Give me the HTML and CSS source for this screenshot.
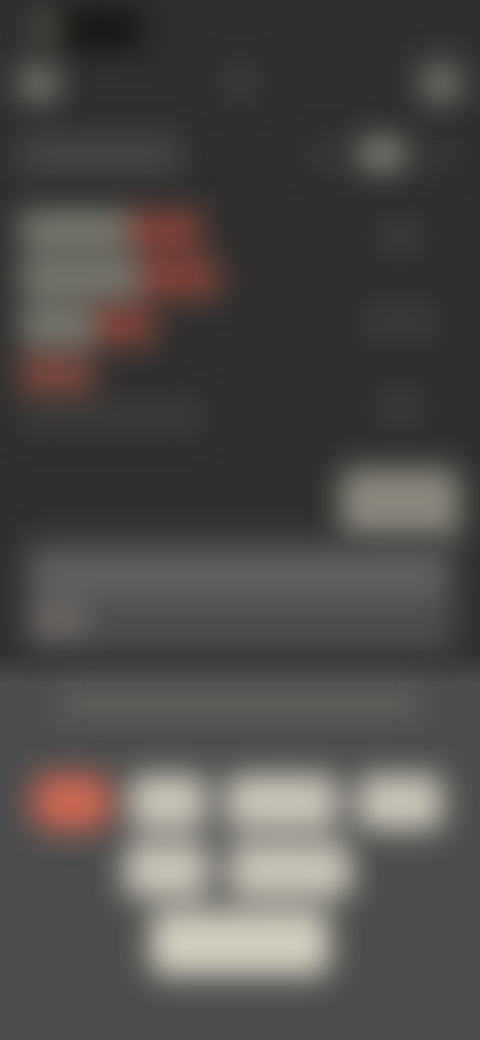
FILE: index.html
```html
<!DOCTYPE html>
<html lang="en">
<head>
<meta charset="utf-8">
<meta name="viewport" content="width=device-width, initial-scale=1">
<title>Overview</title>
<link rel="stylesheet" href="styles.css">
</head>
<body>
<main class="screen">
  <div class="status soft"><span class="island"></span><span class="status-dot"></span></div>
  <header class="header soft">
    <button class="round" aria-label="Back"></button>
    <span class="mark"></span>
    <button class="round" aria-label="Menu"></button>
  </header>
  <div class="title-row soft">
    <h1 class="title" aria-label="Overview"></h1>
    <nav class="tabs" aria-label="Views">
      <button class="tab" aria-label="First view"></button>
      <button class="tab active" aria-label="Second view"></button>
      <button class="tab" aria-label="Third view"></button>
    </nav>
  </div>
  <section class="summary">
    <div class="bars soft">
      <div class="bar first"><span class="light"></span><span class="red"></span></div>
      <div class="bar second"><span class="light"></span><span class="red"></span></div>
      <div class="bar third"><span class="light"></span><span class="red"></span></div>
      <div class="bar fourth"><span class="red"></span></div>
      <div class="note"></div>
    </div>
    <div class="side soft">
      <span class="entry"></span>
      <span class="entry wide"></span>
      <span class="entry"></span>
      <button class="action" aria-label="Continue"></button>
    </div>
  </section>
  <section class="card soft">
    <div class="line"></div>
    <div class="word"></div>
  </section>
</main>
<section class="sheet">
  <div class="prompt soft"></div>
  <div class="choices soft">
    <div class="choice-row">
      <button class="choice selected" aria-label="Choice 1"></button>
      <button class="choice" aria-label="Choice 2"></button>
      <button class="choice large" aria-label="Choice 3"></button>
      <button class="choice medium" aria-label="Choice 4"></button>
    </div>
    <div class="choice-row middle">
      <button class="choice medium" aria-label="Choice 5"></button>
      <button class="choice wide" aria-label="Choice 6"></button>
    </div>
    <div class="choice-row">
      <button class="choice primary" aria-label="Choice 7"></button>
    </div>
  </div>
</section>
</body>
</html>
```
FILE: styles.css
```css
* { box-sizing: border-box; }
body {
  margin: 0;
  min-height: 100vh;
  display: flex;
  flex-direction: column;
  overflow-x: hidden;
  background: #303030;
  font-family: "Liberation Sans", sans-serif;
}
button { border: 0; padding: 0; }
.soft { filter: blur(15px); }
.screen { padding: 8px 20px 0; }
.status {
  display: flex;
  align-items: center;
  position: relative;
  height: 42px;
  padding-left: 32px;
}
.island { width: 90px; height: 42px; border-radius: 8px; background: #161614; }
.status-dot {
  position: absolute;
  left: 14px;
  top: 6px;
  width: 28px;
  height: 28px;
  border-radius: 50%;
  background: #5c5a50;
}
.header {
  display: flex;
  justify-content: space-between;
  align-items: center;
  height: 66px;
  margin: 0 -4px;
}
.round { width: 46px; height: 46px; border-radius: 50%; background: #6e6c66; }
.mark { width: 28px; height: 36px; border-radius: 8px; background: #3e3d39; }
.title-row {
  display: flex;
  justify-content: space-between;
  align-items: center;
  height: 76px;
}
.title { width: 160px; height: 34px; margin: 0; background: #4a4946; }
.tabs { display: flex; align-items: center; gap: 16px; }
.tab { width: 36px; height: 20px; border-radius: 8px; background: #3b3b38; }
.tab.active { width: 52px; height: 34px; border-radius: 16px; background: #817f76; }
.summary {
  display: flex;
  justify-content: space-between;
  padding-top: 18px;
}
.bars { display: flex; flex-direction: column; gap: 8px; width: 200px; }
.bar { display: flex; height: 40px; }
.light { background: #7b7b71; }
.red { background: #834539; border-radius: 0 8px 8px 0; }
.first .light { width: 110px; }
.first .red { width: 72px; }
.second .light { width: 120px; }
.second .red { width: 82px; }
.third .light { width: 75px; }
.third .red { width: 60px; }
.fourth .red { width: 74px; background: #7f4a3f; }
.note { width: 184px; height: 28px; background: #3c3c3a; }
.side {
  display: flex;
  flex-direction: column;
  align-items: center;
  width: 120px;
}
.entry {
  width: 48px;
  height: 32px;
  margin: 10px 0 44px;
  background: #3a3a37;
}
.entry.wide { width: 76px; }
.action { width: 120px; height: 72px; border-radius: 12px; background: #8b897e; }
.card {
  height: 112px;
  margin: 0 6px;
  padding: 16px 6px;
  border-radius: 8px;
  background: #4e4e4e;
}
.line { height: 40px; background: #616160; }
.word { width: 54px; height: 28px; margin-top: 10px; background: #726c68; }
.sheet {
  flex: 1;
  padding: 40px 20px 52px;
  background: linear-gradient(#4e4e4e00, #4e4e4e 32px);
}
.prompt { height: 24px; margin: 0 36px; background: #61615d; }
.choices {
  display: flex;
  flex-direction: column;
  align-items: center;
  gap: 12px;
  padding-top: 58px;
}
.choice-row { display: flex; justify-content: center; gap: 18px; }
.choice-row.middle,
.choice-row:first-child { padding-right: 4px; }
.choice {
  width: 78px;
  height: 56px;
  border-radius: 14px;
  background: #cac7b9;
}
.choice.medium { width: 86px; }
.choice.large { width: 114px; }
.choice.wide { width: 124px; }
.choice.selected { border-radius: 20px; background: #cd6753; }
.choice.primary { width: 180px; height: 66px; background: #d3d0c0; }
```
